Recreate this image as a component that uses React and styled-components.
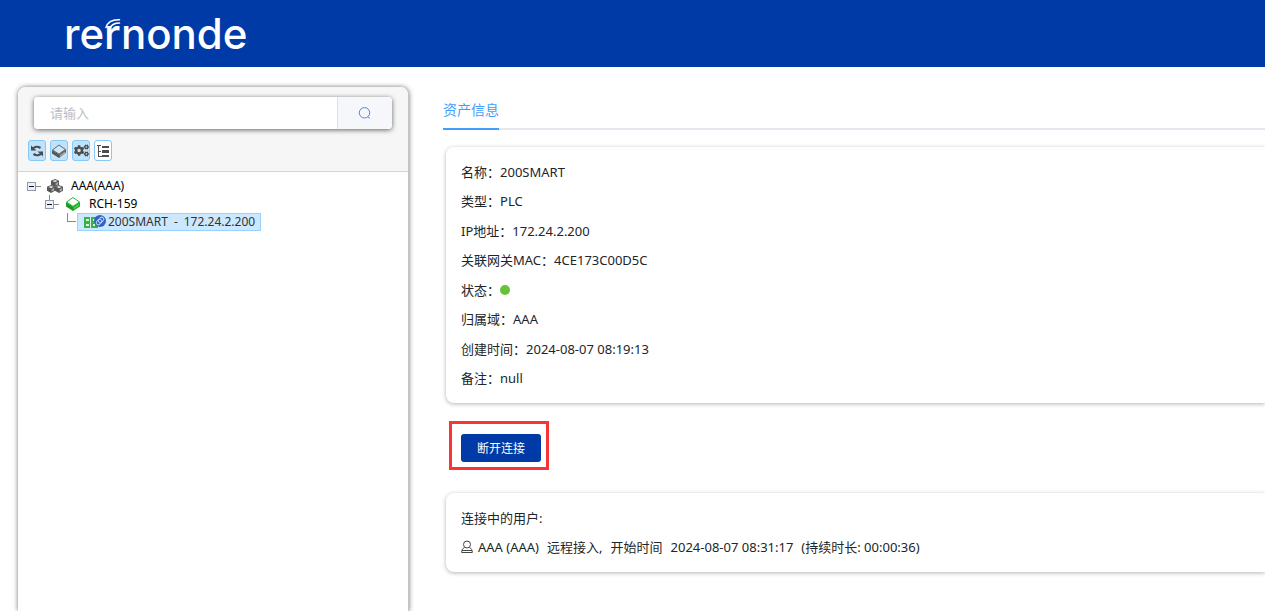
import React from 'react';
import styled, { createGlobalStyle, css } from 'styled-components';
import { FaCogs } from 'react-icons/fa';

const GlobalStyle = createGlobalStyle`
    * {
        box-sizing: border-box;
    }

    body {
        margin: 0;
        background: #fff;
        color: #212529;
        font-family: 'Noto Sans', 'Noto Sans CJK SC', sans-serif;
        font-size: 13px;
    }

    button, input {
        font: inherit;
        margin: 0;
    }
`;

const Page = styled.div`
    display: flex;
    flex-direction: column;
    height: 100vh;
    overflow: hidden;
`;

const Header = styled.header`
    display: flex;
    align-items: center;
    flex: none;
    height: 67px;
    padding-left: 64px;
    background: #003aa6;
`;

const Brand = styled.a`
    position: relative;
    color: #fff;
    font-family: Inter, sans-serif;
    font-size: 42px;
    font-weight: 500;
    line-height: 66px;
    text-decoration: none;
`;

const Signal = styled.svg`
    position: absolute;
    left: 40px;
    top: 16px;
`;

const Body = styled.div`
    display: flex;
    flex: 1;
    min-height: 0;
    padding: 20px 0 0 18px;
`;

const Sidebar = styled.aside`
    flex: none;
    width: 391px;
    border-right: 1px solid #c4c4c4;
    border-radius: 8px 8px 0 0;
    background: #fff;
    box-shadow: 0 0 5px rgba(0, 0, 0, 0.55);
    overflow: hidden;
`;

const SidebarTop = styled.div`
    padding: 10px 16px 10px 10px;
    border-bottom: 1px solid #d5d5d5;
    background: #f6f6f6;
`;

const Search = styled.form`
    display: flex;
    height: 32px;
    margin-left: 6px;
    border-radius: 4px;
    background: #fff;
    box-shadow: 0 1px 5px rgba(0, 0, 0, 0.6);
    overflow: hidden;
`;

const SearchInput = styled.input`
    flex: 1;
    min-width: 0;
    padding: 0 16px;
    border: 0;
    background: #fff;
    outline: none;

    &::placeholder {
        color: #b9bdc6;
    }
`;

const SearchButton = styled.button`
    display: flex;
    align-items: center;
    justify-content: center;
    width: 55px;
    padding: 0;
    border: 0;
    border-left: 1px solid #dcdfe6;
    background: #f5f7fb;
    color: #4a83f0;
`;

const Tools = styled.div`
    display: flex;
    gap: 4px;
    margin-top: 11px;
`;

const ToolButton = styled.button`
    display: flex;
    align-items: center;
    justify-content: center;
    width: 18px;
    height: 21px;
    padding: 0;
    border: 1px solid #86c8f8;
    border-radius: 3px;
    background: ${({ $active }) => ($active ? '#bfe2fd' : '#fff')};
    color: #4d4d4d;
`;

const Tree = styled.ul`
    margin: 0;
    padding: ${({ $root }) => ($root ? '5px 0 0 5px' : '0')};
    list-style: none;
    font-size: 12px;
`;

const TreeItem = styled.li`
    padding-left: ${({ $level }) => ($level ? 18 : 0)}px;
`;

const TreeRow = styled.div`
    display: flex;
    height: 18px;
`;

const TreeLink = styled.a`
    display: flex;
    align-items: center;
    gap: 7px;
    padding: 0 5px;
    color: #000;
    line-height: 16px;
    text-decoration: none;
    white-space: nowrap;

    ${({ $selected }) => $selected && css`
        gap: 2px;
        padding-left: 6px;
        border: 1px solid #99d1ff;
        background: #cce8ff;
        color: #333;
    `}
`;

const AssetName = styled.span`
    display: flex;
    gap: 6px;
`;

const Main = styled.main`
    flex: 1;
    min-width: 0;
    padding: 12px 0 0 34px;
    line-height: 20px;
`;

const Tabs = styled.nav`
    display: flex;
    height: 31px;
    box-shadow: inset 0 -2px #e4e7ed;
`;

const Tab = styled.a`
    border-bottom: 2px solid #409eff;
    color: #409eff;
    font-size: 14px;
    line-height: 22px;
    text-decoration: none;
`;

const Card = styled.section`
    display: grid;
    align-items: center;
    height: ${({ $height }) => $height}px;
    margin-left: 3px;
    padding: 10px 15px;
    border-radius: 8px 0 0 8px;
    background: #fff;
    box-shadow: 0 1px 4px rgba(0, 0, 0, 0.3);
`;

const AssetCard = styled(Card)`
    margin-top: 17px;
`;

const Row = styled.div`
    display: flex;
    align-items: center;
    white-space: pre;
`;

const Session = styled(Row)`
    gap: 8px;
`;

const SessionUser = styled.span`
    display: flex;
    align-items: center;
    gap: 5px;
`;

const StatusDot = styled.span`
    width: 10px;
    height: 10px;
    border-radius: 50%;
    background: #67c23a;
`;

const Highlight = styled.div`
    width: fit-content;
    margin: 18px 0 23px 6px;
    padding: 10px 5px 5px 9px;
    border: 3px solid #f93434;
`;

const DisconnectButton = styled.button`
    display: block;
    width: 80px;
    height: 28px;
    padding: 2px 0 0;
    border: 0;
    border-radius: 3px;
    background: #003aa6;
    color: #fff;
    font-size: 12px;
    line-height: 26px;
`;

const SearchIcon = () => (
    <svg width="14" height="14" viewBox="0 0 14 14" fill="none" stroke="currentColor">
        <circle cx="6.5" cy="6.8" r="5.2" />
        <path d="M9.8 10.8l2 1.600" />
    </svg>
);

const RefreshIcon = () => (
    <svg width="14" height="14" viewBox="0 0 14 14">
        <g fill="none" stroke="currentColor" strokeWidth="2.200">
            <path d="M2 6C2.800 3.200 7 1.500 10.500 4" />
            <path d="M12 8C11.200 10.800 7 12.500 3.500 10" />
        </g>
        <path d="M1 1.500L6.500 6.500H1zM13 12.500L7.500 7.500H13z" fill="currentColor" />
    </svg>
);

const BoxIcon = () => (
    <svg width="16" height="16" viewBox="0 0 16 16">
        <path d="M1 7v3.500L8 15l7-5.500V6L8 11.500z" fill="#555" />
        <path d="M8.800 12.200l5.400-4v1.800l-5.400 4z" fill="#aaa" />
        <path d="M8 2l6.500 4.500L8 11 1.500 7z" fill="#cfe6f7" stroke="#666" />
    </svg>
);

const ListIcon = () => (
    <svg width="14" height="14" viewBox="0 0 14 14" shapeRendering="crispEdges" fill="#4d4d4d">
        <path d="M1 1h4v1H3v10h3v1H2V2H1zM3 7h2v1H3z" />
        <path d="M6 2h7v2H6zM6 6h7v3H6zM6 11h7v2H6z" />
    </svg>
);

const Switch = ({ type }) => (
    <svg width="18" height="18" viewBox="0 0 18 18" shapeRendering="crispEdges">
        {type === 'leaf' && <path d="M8 0h1v8h8v1H8z" fill="#888" />}
        {type !== 'leaf' && (
            <>
                {type === 'child' && <path d="M8 0h1v5H8z" fill="#888" />}
                <path d="M13 9h5v1h-5z" fill="#888" />
                <rect x="4.5" y="5.5" width="8" height="8" fill="#edf1f7" stroke="#8a9ab0" />
                <path d="M6 9h5v1H6z" fill="#111" />
            </>
        )}
    </svg>
);

const Cube = ({ x, y }) => (
    <g transform={`translate(${x} ${y})`}>
        <path d="M4 0l4 1.8v4L4 8 0 5.800V1.800z" fill="#555" />
        <path d="M4 1l2.600 1L4 3.200 1.400 2z" fill="#e2e2e2" />
        <path d="M4.600 4.300l2.600-1.300v2.300L4.600 6.700z" fill="#a9a9a9" />
    </g>
);

const DomainIcon = () => (
    <svg width="18" height="16" viewBox="0 0 18 16">
        <Cube x={5} y={1} />
        <Cube x={1} y={7} />
        <Cube x={9} y={7} />
    </svg>
);

const GatewayIcon = () => (
    <svg width="18" height="16" viewBox="0 0 18 16">
        <path d="M2 6v4.500L9 15l7-4.500V6l-7 4.500z" fill="#1a9b26" />
        <path d="M9.700 11.300L15.400 7.500v2.300l-5.700 3.800z" fill="#43d43e" />
        <path d="M9 1.500L15.500 6 9 10.300 2.500 6z" fill="#fff" stroke="#2bb52f" />
    </svg>
);

const PlcIcon = () => (
    <svg width="22" height="16" viewBox="0 0 22 16">
        <rect x="0" y="3" width="14" height="11" fill="#35b44a" />
        <path d="M2 5h3v2H2zM2 10h3v2H2zM6 3h1v11H6zM9 5h2v2H9zM9 10h2v2H9z" fill="#d9f4dd" />
        <circle cx="16" cy="7" r="6" fill="#3262bf" />
        <g fill="none" stroke="#b8d0ff" strokeWidth="1" transform="rotate(-45 16 7)">
            <rect x="11.500" y="5" width="6" height="4" rx="2" />
            <rect x="14.500" y="5" width="6" height="4" rx="2" />
        </g>
    </svg>
);

const UserIcon = () => (
    <svg width="12" height="14" viewBox="0 0 12 14" fill="none" stroke="#444">
        <circle cx="6" cy="4.500" r="3.500" />
        <path d="M3.500 7.500C1.500 8.500.7 10 .7 12.500h10.600c0-2.500-.8-4-2.800-5M1 10.500h10" />
    </svg>
);

const assetInfo = [
    { label: '名称', value: '200SMART' },
    { label: '类型', value: 'PLC' },
    { label: 'IP地址', value: '172.24.2.200' },
    { label: '关联网关MAC', value: '4CE173C00D5C' },
    { label: '状态', value: <StatusDot role="img" aria-label="在线" /> },
    { label: '归属域', value: 'AAA' },
    { label: '创建时间', value: '2024-08-07 08:19:13' },
    { label: '备注', value: 'null' },
];

const App = () => (
    <>
        <GlobalStyle />
        <Page>
            <Header>
                <Brand href="#">
                    rernonde
                    <Signal width="20" height="14" viewBox="0 0 20 14" fill="none" stroke="#fff" strokeWidth="1.600" strokeLinecap="round">
                        <path d="M2 10.500C3.500 5.500 8 2.500 15.500 2.800" />
                        <path d="M6 11C7.500 7.800 10.500 6 15.500 6" />
                    </Signal>
                </Brand>
            </Header>
            <Body>
                <Sidebar>
                    <SidebarTop>
                        <Search onSubmit={e => e.preventDefault()}>
                            <SearchInput type="text" placeholder="请输入" aria-label="请输入" />
                            <SearchButton type="submit" aria-label="搜索"><SearchIcon /></SearchButton>
                        </Search>
                        <Tools>
                            <ToolButton type="button" $active aria-label="刷新"><RefreshIcon /></ToolButton>
                            <ToolButton type="button" $active aria-label="网关"><BoxIcon /></ToolButton>
                            <ToolButton type="button" $active aria-label="设备"><FaCogs size={15} /></ToolButton>
                            <ToolButton type="button" aria-label="展开"><ListIcon /></ToolButton>
                        </Tools>
                    </SidebarTop>
                    <Tree $root>
                        <TreeItem>
                            <TreeRow>
                                <Switch type="root" />
                                <TreeLink href="#"><DomainIcon />AAA(AAA)</TreeLink>
                            </TreeRow>
                            <Tree>
                                <TreeItem $level>
                                    <TreeRow>
                                        <Switch type="child" />
                                        <TreeLink href="#"><GatewayIcon />RCH-159</TreeLink>
                                    </TreeRow>
                                    <Tree>
                                        <TreeItem $level>
                                            <TreeRow>
                                                <Switch type="leaf" />
                                                <TreeLink href="#" $selected>
                                                    <PlcIcon />
                                                    <AssetName>
                                                        <span>200SMART</span>
                                                        <span>-</span>
                                                        <span>172.24.2.200</span>
                                                    </AssetName>
                                                </TreeLink>
                                            </TreeRow>
                                        </TreeItem>
                                    </Tree>
                                </TreeItem>
                            </Tree>
                        </TreeItem>
                    </Tree>
                </Sidebar>
                <Main>
                    <Tabs>
                        <Tab href="#">资产信息</Tab>
                    </Tabs>
                    <AssetCard $height={256}>
                        {assetInfo.map(({ label, value }) => (
                            <Row key={label}>{label}：{value}</Row>
                        ))}
                    </AssetCard>
                    <Highlight>
                        <DisconnectButton type="button">断开连接</DisconnectButton>
                    </Highlight>
                    <Card $height={79}>
                        <Row>连接中的用户:</Row>
                        <Session>
                            <SessionUser><UserIcon />AAA (AAA)</SessionUser>
                            <span>远程接入,</span>
                            <span>开始时间</span>
                            <span>2024-08-07 08:31:17</span>
                            <span>(持续时长: 00:00:36)</span>
                        </Session>
                    </Card>
                </Main>
            </Body>
        </Page>
    </>
);

export default App;
